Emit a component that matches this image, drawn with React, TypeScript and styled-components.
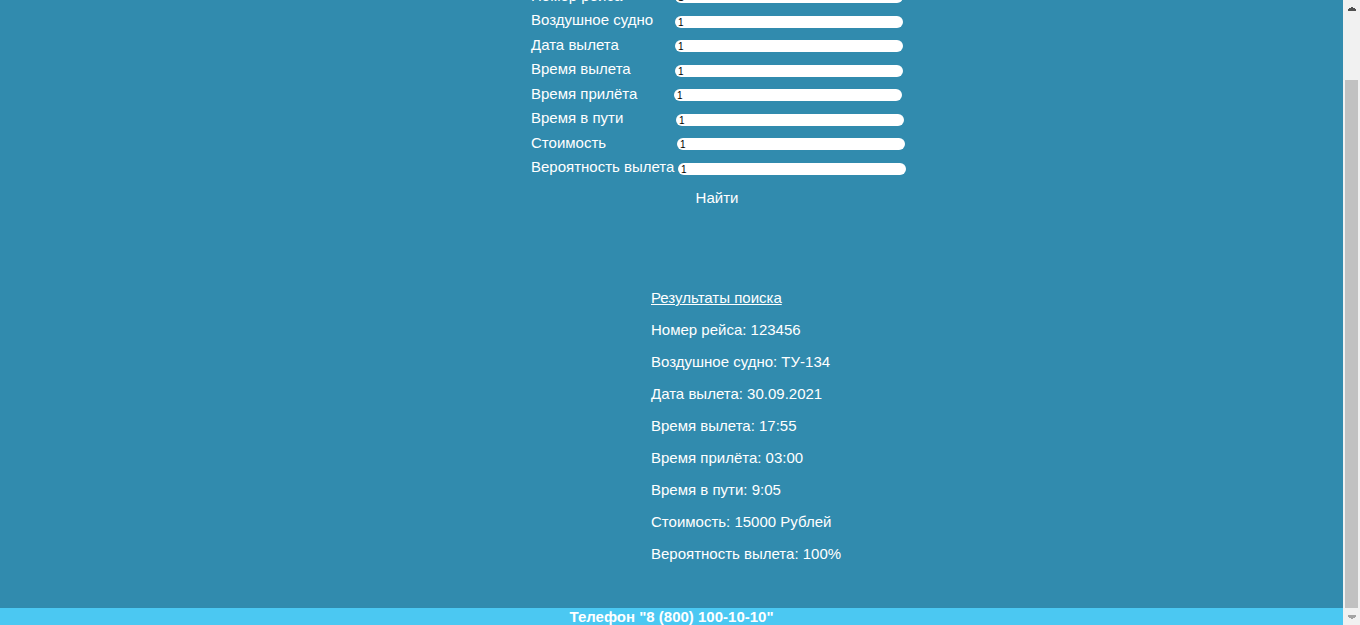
import React from "react";
import styled, { createGlobalStyle } from "styled-components";

const GlobalStyle = createGlobalStyle`
  html, body {
    margin: 0;
    padding: 0;
    overflow: hidden;
    font-family: "Liberation Sans", Arial, sans-serif;
  }
  * { box-sizing: border-box; }
`;

const Screen = styled.div`
  display: flex;
  width: 100vw;
  height: 625px;
`;

const Viewport = styled.div`
  flex: 1;
  display: flex;
  flex-direction: column;
  background: #318bae;
  overflow: hidden;
  color: #ffffff;
  font-size: 15px;
`;

const Main = styled.main`
  flex: 1;
  display: block;
`;

const SearchForm = styled.form`
  display: flex;
  flex-direction: column;
  width: 376px;
  margin: -17px 0 0 531px;
`;

const FieldRow = styled.div`
  display: flex;
  align-items: center;
  height: 24.5px;
`;

const FieldLabel = styled.label`
  flex: 0 0 144px;
  line-height: 17px;
  white-space: nowrap;
  color: #ffffff;
`;

const FieldInput = styled.input<{ $shift: number }>`
  width: 228px;
  height: 12px;
  margin: 4px 0 0 ${(p) => p.$shift}px;
  padding: 1px 0 0 3px;
  border: none;
  border-radius: 6px;
  background: #ffffff;
  color: #000000;
  font-family: "Liberation Sans", Arial, sans-serif;
  font-size: 10px;
  line-height: 11px;
  outline: none;
`;

const SubmitButton = styled.button`
  align-self: center;
  margin: 10px 4px 0 0;
  padding: 0;
  border: none;
  background: transparent;
  color: #ffffff;
  font-family: "Liberation Sans", Arial, sans-serif;
  font-size: 15px;
  line-height: 17px;
  cursor: pointer;
`;

const Results = styled.section`
  padding: 83px 0 0 651px;
`;

const ResultLine = styled.p<{ $heading?: boolean }>`
  margin: 0 0 15px;
  line-height: 17px;
  text-decoration: ${(p) => (p.$heading ? "underline" : "none")};
`;

const Footer = styled.footer`
  height: 17px;
  background: #4bc8f2;
  color: #ffffff;
  font-weight: bold;
  font-size: 15px;
  line-height: 17px;
  text-align: center;
  white-space: nowrap;
`;

const Scrollbar = styled.div`
  flex: 0 0 17px;
  display: flex;
  flex-direction: column;
  background: #f1f1f1;
`;

const ArrowBox = styled.div`
  flex: 0 0 17px;
  display: flex;
  align-items: center;
  justify-content: center;
`;

const Track = styled.div`
  flex: 1;
  display: flex;
  flex-direction: column;
  justify-content: flex-end;
  padding: 0 2px;
`;

const Thumb = styled.div`
  height: 528px;
  background: #c1c1c1;
`;

const fields: { label: string; shift: number }[] = [
  { label: "Номер рейса", shift: 0 },
  { label: "Воздушное судно", shift: 0 },
  { label: "Дата вылета", shift: 0 },
  { label: "Время вылета", shift: 0 },
  { label: "Время прилёта", shift: -1 },
  { label: "Время в пути", shift: 1 },
  { label: "Стоимость", shift: 2 },
  { label: "Вероятность вылета", shift: 3 },
];

const results = [
  "Номер рейса: 123456",
  "Воздушное судно: ТУ-134",
  "Дата вылета: 30.09.2021",
  "Время вылета: 17:55",
  "Время прилёта: 03:00",
  "Время в пути: 9:05",
  "Стоимость: 15000 Рублей",
  "Вероятность вылета: 100%",
];

function Arrow({ up }: { up: boolean }) {
  return (
    <svg width="8" height="4" viewBox="0 0 8 4" shapeRendering="crispEdges">
      {up ? (
        <path d="M3 0h2v1h2v1h1v2H0V2h1V1h2z" fill="#505050" />
      ) : (
        <path d="M0 0h8v2H7v1H5v1H3V3H1V2H0z" fill="#a3a3a3" />
      )}
    </svg>
  );
}

export default function App() {
  return (
    <>
      <GlobalStyle />
      <Screen>
        <Viewport>
          <Main>
            <SearchForm onSubmit={(e) => e.preventDefault()}>
              {fields.map((f) => (
                <FieldRow key={f.label}>
                  <FieldLabel>{f.label}</FieldLabel>
                  <FieldInput $shift={f.shift} defaultValue="1" readOnly />
                </FieldRow>
              ))}
              <SubmitButton type="submit">Найти</SubmitButton>
            </SearchForm>
            <Results>
              <ResultLine $heading>Результаты поиска</ResultLine>
              {results.map((r) => (
                <ResultLine key={r}>{r}</ResultLine>
              ))}
            </Results>
          </Main>
          <Footer>Телефон "8 (800) 100-10-10"</Footer>
        </Viewport>
        <Scrollbar>
          <ArrowBox>
            <Arrow up />
          </ArrowBox>
          <Track>
            <Thumb />
          </Track>
          <ArrowBox>
            <Arrow up={false} />
          </ArrowBox>
        </Scrollbar>
      </Screen>
    </>
  );
}
